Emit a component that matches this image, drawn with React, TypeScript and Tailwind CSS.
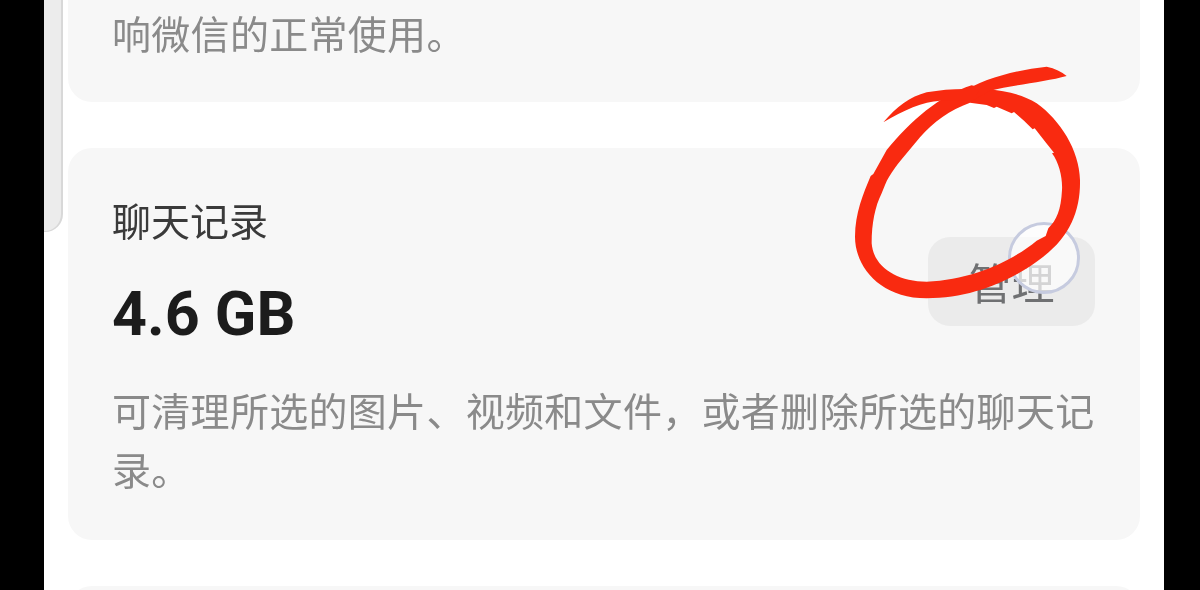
const cjk = "font-['Noto_Sans_CJK_SC','Noto_Sans',sans-serif]";

function RedScribble() {
  // hand drawn circle, coordinates are 3x the screen px
  return (
    <svg viewBox="0 0 840 900" className="absolute left-[840px] top-[50px] h-[300px] w-[280px]" fill="#f92a10">
      <path
        fillRule="evenodd"
        d="M395 106C300 135 210 215 140 300L100 372L92 378C70 430 45 490 45 560C45 650 120 745 260 745C400 745 520 690 610 620C690 560 722 480 720 390C718 300 660 210 590 160C550 135 500 122 440 118ZM390 158L440 165L462 174L470 170L515 190L522 186L552 212L578 238L584 235L618 278L642 308L636 310C658 340 668 385 666 420C663 480 650 510 625 535L617 558L590 572C520 630 400 690 260 695C170 695 100 650 95 580C95 520 105 470 125 430L135 405C150 370 175 340 200 310L225 280L240 262C280 215 330 180 390 158Z"
      />
      <path d="M360 130C430 85 530 60 620 50C645 55 665 65 680 78C620 95 520 105 450 122L400 150Z" />
      <path d="M130 217C170 170 210 140 260 127C310 118 360 115 420 118L400 150L300 152C250 155 190 180 130 217Z" />
    </svg>
  );
}

export default function App() {
  return (
    <div className={`relative flex h-[590px] w-[1200px] overflow-hidden bg-black ${cjk}`}>
      <div className="w-[44px] shrink-0" />
      <div className="flex w-[1120px] shrink-0 flex-col gap-[46px] bg-white px-[24px]">
        <div className="flex h-[102px] shrink-0 items-end rounded-b-[24px] bg-[#f7f7f7] px-[44px] pb-[40px]">
          <p className="text-[39px] leading-[59px] tracking-[0.3px] text-[#8a8a8a] blur-[0.5px]">响微信的正常使用。</p>
        </div>

        <div className="h-[392px] shrink-0 rounded-[24px] bg-[#f7f7f7] pl-[44px] pr-[45px] pt-[42px]">
          <div className="flex items-start justify-between">
            <div>
              <div className="text-[39px] leading-[58px] text-[#3a3a3a] blur-[0.5px]">聊天记录</div>
              <div className="mt-[30px] font-['Roboto',sans-serif] text-[61px] font-bold leading-[72px] text-[#1c1c1c] blur-[0.4px]">4.6 GB</div>
            </div>
            <div className="mt-[47px] flex h-[89px] w-[167px] items-center justify-center rounded-[22px] bg-[#ebebeb] text-[43px] text-[#6f7072] blur-[0.5px]">
              管理
            </div>
          </div>
          <p className="mt-[30px] text-[39px] leading-[59px] tracking-[0.3px] text-[#8a8a8a] blur-[0.5px]">
            可清理所选的图片、视频和文件，或者删除所选的聊天记录。
          </p>
        </div>

        <div className="h-[60px] shrink-0 rounded-t-[24px] bg-[#f7f7f7]" />
      </div>
      <div className="w-[36px] shrink-0" />

      {/* side handle over the page edge */}
      <div className="absolute left-[44px] top-0 h-[232px] w-[19px] rounded-br-[18px] border-b border-r-2 border-[#d8d8d8] bg-[#ececec]" />
      {/* touch indicator */}
      <div className="absolute left-[1008px] top-[222px] h-[72px] w-[72px] rounded-full border-[3px] border-[#c6cbdf] bg-white/70 blur-[0.5px]" />
      <RedScribble />
    </div>
  );
}
